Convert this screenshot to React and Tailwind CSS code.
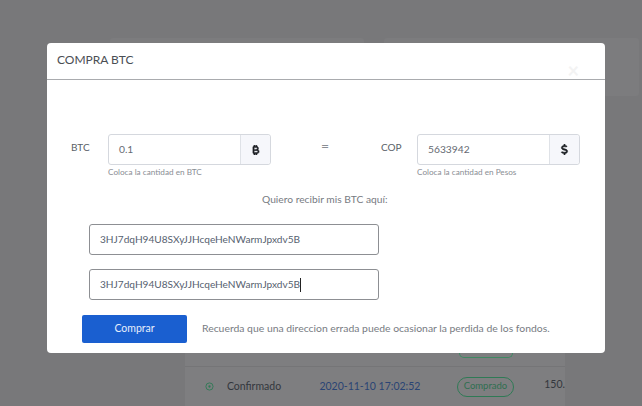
import React from "react";
import { FaBitcoinSign, FaDollarSign } from "react-icons/fa6";

function AmountField({ label, value, hint, addon, labelW }) {
  return (
    <div className="flex items-start">
      <div className={`${labelW} pt-[6px] text-[10px] leading-[14px] text-[#5a5f67]`}>{label}</div>
      <div>
        <div className="flex h-[31px] w-[163px] rounded-[3px] border border-[#d5d8de] bg-white">
          <div className="flex-1 pl-[10px] pt-[7px] text-[10.25px] leading-[15px] text-[#656a72]">{value}</div>
          <div className="flex w-[30px] items-center justify-center rounded-r-[3px] border-l border-[#dfe2e7] bg-[#f6f7fb] text-[#1c1f24]">
            {addon}
          </div>
        </div>
        <div className="mt-[2px] text-[8.2px] leading-[11px] text-[#8a8e94]">{hint}</div>
      </div>
    </div>
  );
}

function Address({ caret }) {
  return (
    <div className="flex h-[31px] w-[290px] items-center rounded-[3px] border border-[#8d8f93] bg-white pl-[10px] text-[10.1px] text-[#56616f]">
      <span>3HJ7dqH94U8SXyJJHcqeHeNWarmJpxdv5B</span>
      {caret && <span className="h-[14px] w-px bg-[#222]" />}
    </div>
  );
}

export default function App() {
  return (
    <div className="relative flex h-[406px] w-[642px] flex-col justify-between overflow-hidden bg-[#78787a] font-['Lato','Noto_Sans',sans-serif]">
      <div className="flex gap-[20px] pl-[110px] pt-[38px]">
        <div className="h-[58px] w-[254px] rounded-[3px] bg-[#7c7c7e]" />
        <div className="h-[58px] w-[255px] rounded-[3px] bg-[#7c7c7e]" />
      </div>
      <div className="ml-[185px] w-[380px] bg-[#7e7e80]">
        <div className="flex h-[14px] justify-end border-b border-[#757577] pr-[52px]">
          <div className="h-[5px] w-[54px] rounded-b-[10px] border border-t-0 border-[#3f8a63]" />
        </div>
        <div className="flex h-[39px] items-center text-[10.5px] text-[#33373d]">
          <svg className="ml-[20px] h-[9px] w-[9px]" viewBox="0 0 10 10" fill="none">
            <circle cx="5" cy="5" r="4" stroke="#2f7a55" strokeWidth="1" />
            <circle cx="5" cy="5" r="1.3" fill="#2f7a55" />
          </svg>
          <span className="ml-[13px] w-[93px]">Confirmado</span>
          <span className="w-[138px] text-[#2a4474]">2020-11-10 17:02:52</span>
          <span className="flex h-[20px] w-[58px] items-center justify-center rounded-full border border-[#2f7a55] text-[9.5px] text-[#2f6f50]">
            Comprado
          </span>
          <span className="ml-[30px] -mt-[3px]">150.</span>
        </div>
      </div>

      <div className="absolute left-[47px] top-[43px] h-[310px] w-[558px] rounded-[4px] bg-white">
        <div className="relative h-[37px] border-b border-[#a9abae] pl-[10px] pt-[8px] text-[12px] leading-[17px] text-[#4a4e54]">
          COMPRA BTC
          <span className="absolute right-[26px] top-[17px] text-[20px] font-bold leading-[20px] text-[#f3f3f3]">×</span>
        </div>
        <div className="flex pl-[24px] pt-[54px]">
          <AmountField label="BTC" value="0.1" hint="Coloca la cantidad en BTC" addon={<FaBitcoinSign className="h-[10px] w-[10px] stroke-[25px]" />} labelW="w-[37px]" />
          <div className="w-[110px] pl-[50px] pt-[4px] text-[14px] leading-[16px] text-[#8a8e94]">=</div>
          <AmountField label="COP" value="5633942" hint="Coloca la cantidad en Pesos" addon={<FaDollarSign className="h-[11px] w-[11px] stroke-[25px]" />} labelW="w-[36px]" />
        </div>
        <div className="mt-[14px] pl-[215px] text-[10.25px] leading-[14px] text-[#777b82]">Quiero recibir mis BTC aquí:</div>
        <div className="mt-[18px] flex flex-col gap-[14px] pl-[42px]">
          <Address />
          <Address caret />
        </div>
        <div className="mt-[15px] flex items-center pl-[35px]">
          <button className="h-[28px] w-[105px] rounded-[2px] bg-[#1a5fd0] text-[10.5px] text-[#e6eefc]">Comprar</button>
          <span className="ml-[15px] text-[10.4px] text-[#777b82]">Recuerda que una direccion errada puede ocasionar la perdida de los fondos.</span>
        </div>
      </div>
    </div>
  );
}
